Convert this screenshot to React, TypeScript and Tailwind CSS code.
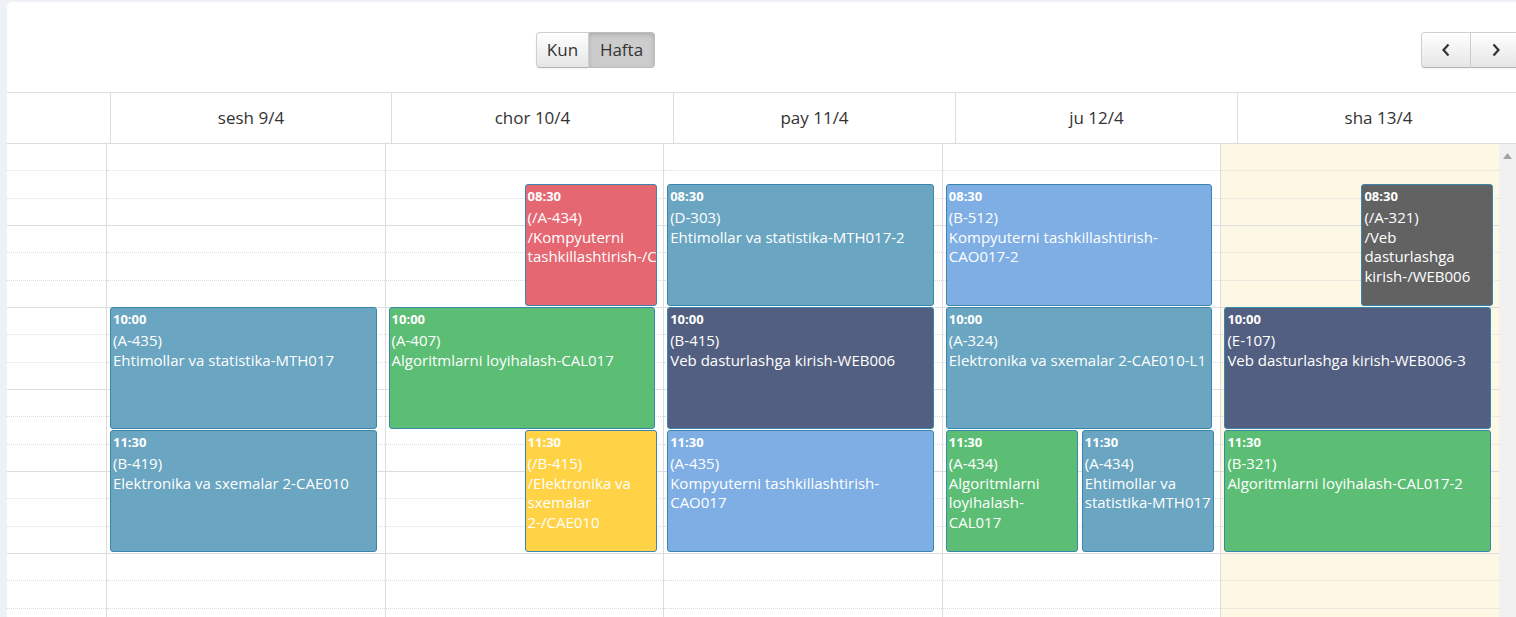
import React from 'react';

interface CalEvent {
  start: number;
  end: number;
  room: string;
  title: string;
  color: string;
  place: string;
}

interface Day {
  label: string;
  today?: boolean;
  events: CalEvent[];
}

const HOUR = 82;
const HOURS = [8, 9, 10, 11, 12, 13, 14];

const TEAL = 'bg-[#6aa5c1]';
const SLATE = 'bg-[#535f80]';
const LIGHT = 'bg-[#7eaee4]';
const GREEN = 'bg-[#5cbd74]';
const RED = 'bg-[#e56771]';
const YELLOW = 'bg-[#ffd345]';
const GRAY = 'bg-[#626262]';

// horizontal placement inside a day column
const FULL = 'left-[3px] right-[8px] pr-[2px]';
const RIGHT = 'left-[139px] right-[6px]';

const days: Day[] = [
  {
    label: 'sesh 9/4',
    events: [
      { start: 10, end: 11.5, room: '(A-435)', title: 'Ehtimollar va statistika-MTH017', color: TEAL, place: FULL },
      { start: 11.5, end: 13, room: '(B-419)', title: 'Elektronika va sxemalar 2-CAE010', color: TEAL, place: FULL },
    ],
  },
  {
    label: 'chor 10/4',
    events: [
      { start: 8.5, end: 10, room: '(/A-434)', title: '/Kompyuterni tashkillashtirish-/CAO017', color: RED, place: RIGHT },
      { start: 10, end: 11.5, room: '(A-407)', title: 'Algoritmlarni loyihalash-CAL017', color: GREEN, place: FULL },
      { start: 11.5, end: 13, room: '(/B-415)', title: '/Elektronika va sxemalar 2-/CAE010', color: YELLOW, place: RIGHT },
    ],
  },
  {
    label: 'pay 11/4',
    events: [
      { start: 8.5, end: 10, room: '(D-303)', title: 'Ehtimollar va statistika-MTH017-2', color: TEAL, place: FULL },
      { start: 10, end: 11.5, room: '(B-415)', title: 'Veb dasturlashga kirish-WEB006', color: SLATE, place: FULL },
      { start: 11.5, end: 13, room: '(A-435)', title: 'Kompyuterni tashkillashtirish-CAO017', color: LIGHT, place: FULL },
    ],
  },
  {
    label: 'ju 12/4',
    events: [
      { start: 8.5, end: 10, room: '(B-512)', title: 'Kompyuterni tashkillashtirish-CAO017-2', color: LIGHT, place: FULL },
      { start: 10, end: 11.5, room: '(A-324)', title: 'Elektronika va sxemalar 2-CAE010-L1', color: TEAL, place: FULL },
      { start: 11.5, end: 13, room: '(A-434)', title: 'Algoritmlarni loyihalash-CAL017', color: GREEN, place: 'left-[3px] right-[142px] pr-[4px]' },
      { start: 11.5, end: 13, room: '(A-434)', title: 'Ehtimollar va statistika-MTH017', color: TEAL, place: RIGHT },
    ],
  },
  {
    label: 'sha 13/4',
    today: true,
    events: [
      { start: 8.5, end: 10, room: '(/A-321)', title: '/Veb dasturlashga kirish-/WEB006', color: GRAY, place: 'left-[140px] right-[6px] pr-[5px]' },
      { start: 10, end: 11.5, room: '(E-107)', title: 'Veb dasturlashga kirish-WEB006-3', color: SLATE, place: FULL },
      { start: 11.5, end: 13, room: '(B-321)', title: 'Algoritmlarni loyihalash-CAL017-2', color: GREEN, place: FULL },
    ],
  },
];

function Slots() {
  return (
    <>
      {HOURS.map((h) => (
        <div key={h}>
          <div className="h-[27px] border-b border-dotted border-[#dddddd]" />
          <div className="h-[28px] border-b border-dotted border-[#dddddd]" />
          <div className="h-[27px] border-b border-[#dddddd]" />
        </div>
      ))}
    </>
  );
}

function EventBox({ ev }: { ev: CalEvent }) {
  const hh = Math.floor(ev.start);
  const mm = ev.start % 1 ? '30' : '00';
  const time = `${hh < 10 ? '0' : ''}${hh}:${mm}`;
  return (
    <div
      className={`absolute overflow-hidden rounded-[3px] border border-[#3a87ad] pl-[2px] pt-[3px] text-white ${ev.color} ${ev.place}`}
      style={{ top: (ev.start - 8) * HOUR - 1, height: (ev.end - ev.start) * HOUR - 1 }}
    >
      <div className="text-[13px] font-bold leading-[17px]">{time}</div>
      <div className="mt-[3px] text-[15px] leading-[19.5px]">
        {ev.room}
        <br />
        {ev.title}
      </div>
    </div>
  );
}

function NavButton({ dir, first }: { dir: 'left' | 'right'; first?: boolean }) {
  return (
    <button
      className={`flex h-[36px] w-[50px] items-center justify-center border border-[#cfcfcf] border-b-[#b3b3b3] bg-linear-to-b from-white to-[#e6e6e6] text-[#333] shadow-[0_1px_2px_rgba(0,0,0,0.05)] ${
        first ? 'rounded-l-[4px]' : 'border-l-0'
      }`}
    >
      <svg width="10" height="14" viewBox="0 0 10 14" fill="none" stroke="#333" strokeWidth={2.2}>
        {dir === 'left' ? <path d="M7.5 1.5 2.5 7l5 5.5" /> : <path d="M2.5 1.5 7.5 7l-5 5.5" />}
      </svg>
    </button>
  );
}

export default function App() {
  return (
    <div
      className="flex h-[617px] w-[1516px] overflow-hidden bg-[#eef1f5] pl-[7px] pt-[2px] text-[#333]"
      style={{ fontFamily: '"Open Sans", "Liberation Sans", sans-serif' }}
    >
      <div className="flex min-w-0 flex-1 flex-col overflow-hidden rounded-tl-[5px] bg-white">
        {/* Toolbar */}
        <div className="flex h-[90px] shrink-0 items-start pt-[30px]">
          <div className="ml-[529px] flex">
            <button className="h-[36px] w-[53px] rounded-l-[4px] border border-[#cfcfcf] border-b-[#b3b3b3] bg-linear-to-b from-white to-[#e6e6e6] text-[17px] text-[#333] shadow-[0_1px_2px_rgba(0,0,0,0.05)]">
              Kun
            </button>
            <button className="h-[36px] w-[66px] rounded-r-[4px] border border-l-0 border-[#bdbdbd] bg-[#cccccc] text-[17px] text-[#333] shadow-[inset_0_2px_4px_rgba(0,0,0,0.15)]">
              Hafta
            </button>
          </div>
          <div className="ml-[766px] flex shrink-0">
            <NavButton dir="left" first />
            <NavButton dir="right" />
          </div>
        </div>

        {/* Day header */}
        <div className="flex h-[52px] shrink-0 border-y border-[#dddddd]">
          <div className="w-[103px] shrink-0" />
          {days.map((d, i) => (
            <div
              key={d.label}
              className={`flex shrink-0 items-center justify-center border-l border-[#dddddd] text-[17px] text-[#333] ${
                i === 0 ? 'w-[281px]' : 'w-[282px]'
              }`}
            >
              {d.label}
            </div>
          ))}
        </div>

        {/* Time grid */}
        <div className="flex min-h-0 flex-1 overflow-hidden">
          <div className="w-[99px] shrink-0">
            <Slots />
          </div>
          {days.map((d) => (
            <div
              key={d.label}
              className={`relative min-w-0 flex-1 border-l border-[#dddddd] ${d.today ? 'bg-[#fcf8e3]' : ''}`}
            >
              <Slots />
              {d.events.map((ev, i) => (
                <EventBox key={i} ev={ev} />
              ))}
            </div>
          ))}
          <div className="flex w-[17px] shrink-0 justify-center bg-[#f1f1f1] pt-[9px]">
            <svg width="9" height="6" viewBox="0 0 9 6">
              <path d="M4.5 0 9 6H0z" fill="#a3a3a3" />
            </svg>
          </div>
        </div>
      </div>
    </div>
  );
}
